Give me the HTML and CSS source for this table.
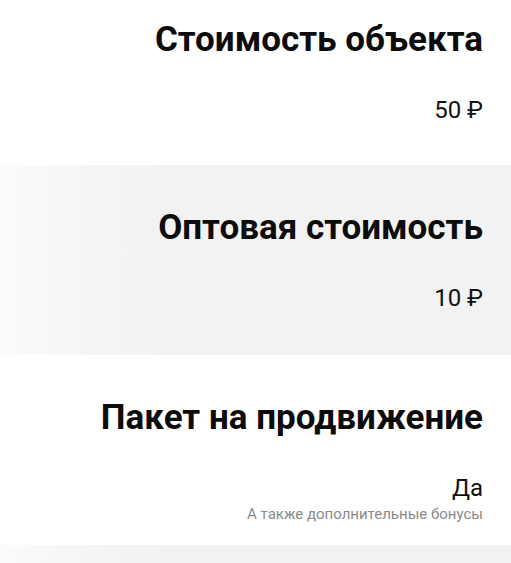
FILE: index.html
```html
<!DOCTYPE html>
<html lang="ru">
<head>
<meta charset="utf-8">
<link rel="stylesheet" href="styles.css">
</head>
<body>
<div class="list">
  <section class="item item-first">
    <h2 class="title">Стоимость объекта</h2>
    <div class="value">50 ₽</div>
  </section>
  <section class="item item-alt">
    <h2 class="title">Оптовая стоимость</h2>
    <div class="value">10 ₽</div>
  </section>
  <section class="item">
    <h2 class="title">Пакет на продвижение</h2>
    <div class="value">Да</div>
    <div class="note">А также дополнительные бонусы</div>
  </section>
  <section class="item item-alt item-last"></section>
</div>
</body>
</html>
```
FILE: styles.css
```css
html, body {
  margin: 0;
  padding: 0;
  background: #ffffff;
}
body {
  font-family: Roboto, "Noto Sans", sans-serif;
  color: #111111;
}
.list {
  display: flex;
  flex-direction: column;
}
.item {
  height: 190px;
  box-sizing: border-box;
  padding: 43px 28px 0 28px;
  display: flex;
  flex-direction: column;
  align-items: flex-end;
  text-align: right;
  background: #ffffff;
}
.item-first {
  height: 165px;
  padding-top: 20px;
}
.item-alt {
  background: linear-gradient(to right, #fbfbfb 0, #f7f7f7 60px, #f2f2f2 160px, #f2f2f2 100%);
}
.item-last {
  height: 18px;
}
.title {
  margin: 0;
  font-size: 35px;
  line-height: 40px;
  font-weight: 700;
  color: #0c0c0c;
}
.value {
  margin-top: 36px;
  font-size: 24px;
  line-height: 28px;
  font-weight: 400;
  color: #111111;
}
.note {
  margin-top: 3px;
  font-size: 15px;
  line-height: 18px;
  color: #8a8a8a;
}
```
